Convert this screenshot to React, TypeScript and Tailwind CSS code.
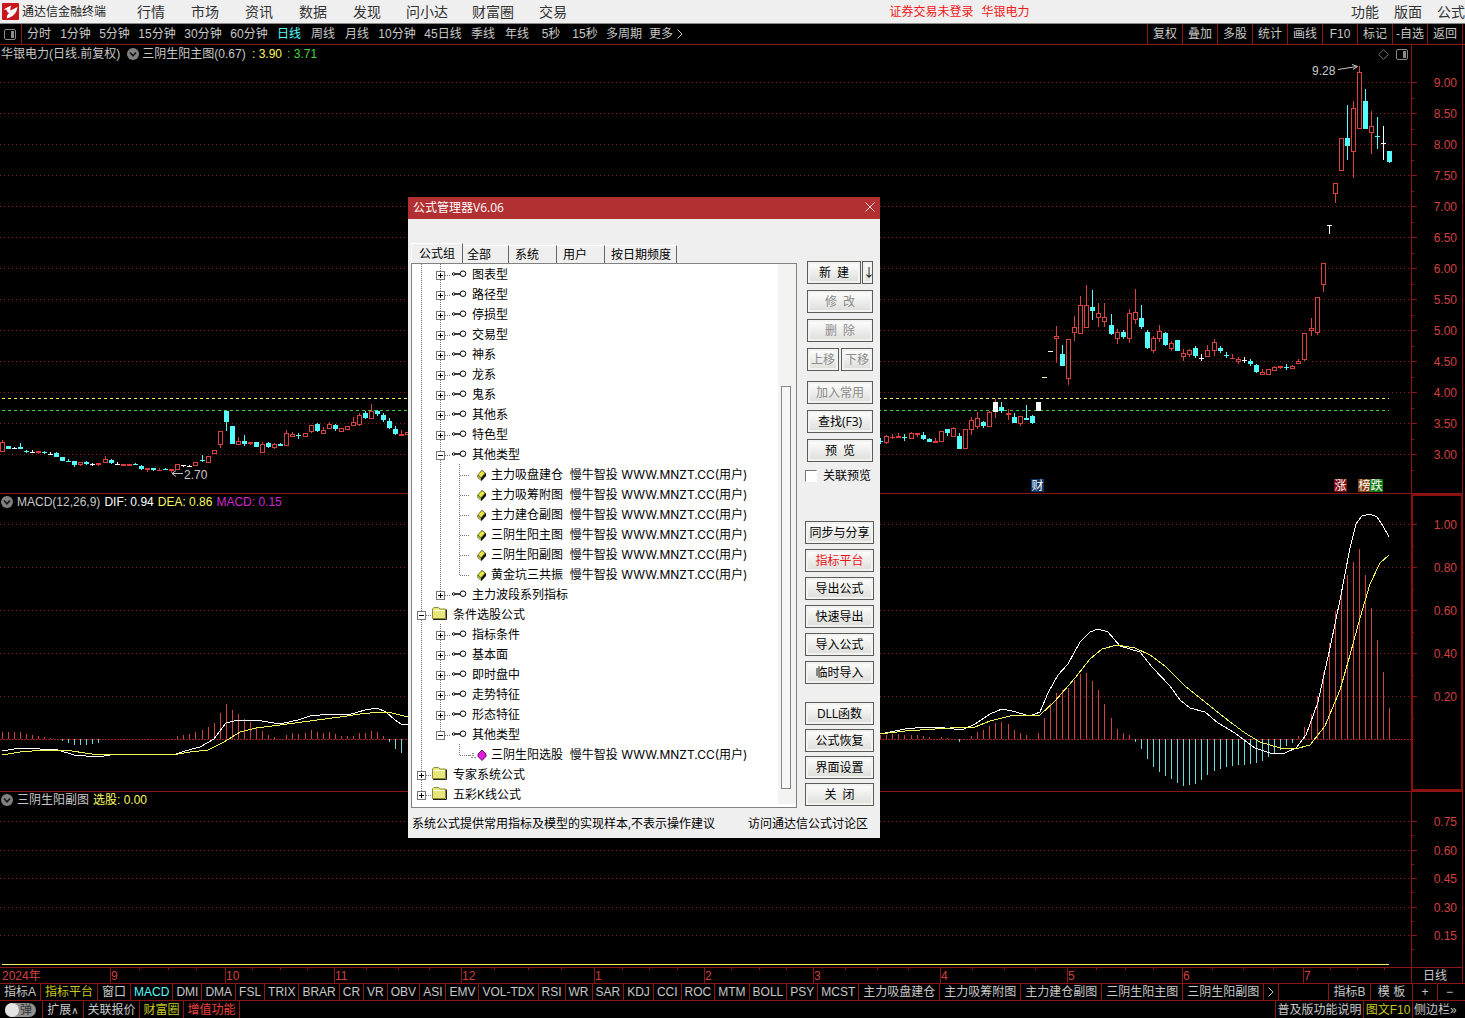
import { Fragment } from "react"

type Candle = [x: number, high: number, top: number, bottom: number, low: number, kind: "u" | "d" | "r" | "w"]
type Point = [number, number]

const menus = ["行情", "市场", "资讯", "数据", "发现", "问小达", "财富圈", "交易"]

const periods = [
  ["分时", "w-[34px]"],
  ["1分钟", "w-[39px]"],
  ["5分钟", "w-[39px]"],
  ["15分钟", "w-[46px]"],
  ["30分钟", "w-[46px]"],
  ["60分钟", "w-[46px]"],
  ["日线", "w-[34px]"],
  ["周线", "w-[34px]"],
  ["月线", "w-[34px]"],
  ["10分钟", "w-[46px]"],
  ["45日线", "w-[46px]"],
  ["季线", "w-[34px]"],
  ["年线", "w-[34px]"],
  ["5秒", "w-[34px]"],
  ["15秒", "w-[34px]"],
  ["多周期", "w-[44px]"],
]

const tools = ["复权", "叠加", "多股", "统计", "画线", "F10", "标记", "-自选", "返回"]

const candles: Candle[] = [
  [2, 440, 442, 452, 452, "u"], [8, 446, 446, 449, 449, "d"], [14, 447, 448, 449, 449, "w"], [20, 443, 447, 449, 449, "d"],
  [26, 450, 451, 452, 453, "d"], [32, 450, 452, 453, 453, "w"], [38, 451, 451, 453, 454, "r"], [44, 451, 452, 453, 454, "d"],
  [50, 452, 454, 455, 455, "w"], [56, 452, 453, 457, 457, "d"], [62, 457, 457, 461, 461, "d"], [68, 459, 461, 462, 462, "d"],
  [74, 461, 461, 465, 467, "d"], [80, 462, 462, 465, 466, "u"], [86, 461, 462, 464, 465, "d"], [92, 463, 464, 465, 466, "w"],
  [98, 463, 463, 465, 466, "r"], [105, 456, 459, 463, 463, "u"], [111, 459, 460, 463, 464, "d"], [117, 462, 464, 465, 465, "w"],
  [123, 464, 464, 466, 466, "r"], [129, 464, 464, 466, 466, "r"], [135, 463, 464, 465, 465, "d"], [141, 465, 466, 469, 470, "d"],
  [147, 468, 468, 470, 472, "r"], [153, 468, 468, 470, 471, "d"], [159, 468, 470, 471, 471, "r"], [165, 468, 469, 470, 470, "d"],
  [171, 469, 469, 471, 473, "r"], [177, 464, 464, 470, 470, "u"], [183, 465, 465, 466, 467, "w"], [189, 465, 466, 467, 467, "w"],
  [195, 462, 462, 466, 466, "u"], [202, 455, 460, 461, 462, "d"], [208, 456, 456, 463, 463, "u"], [214, 450, 450, 454, 454, "u"],
  [220, 431, 431, 445, 448, "u"], [226, 411, 411, 422, 431, "d"], [232, 426, 426, 444, 444, "d"], [238, 437, 441, 445, 445, "u"],
  [244, 435, 441, 444, 446, "d"], [250, 442, 442, 444, 445, "r"], [256, 442, 442, 447, 447, "d"], [262, 442, 444, 453, 453, "u"],
  [268, 442, 443, 447, 448, "d"], [274, 443, 444, 448, 449, "u"], [280, 443, 444, 446, 446, "d"], [286, 430, 433, 446, 446, "u"],
  [292, 432, 434, 437, 437, "u"], [298, 433, 435, 436, 439, "d"], [305, 433, 433, 437, 437, "u"], [311, 425, 425, 432, 433, "u"],
  [317, 423, 424, 431, 432, "d"], [323, 427, 430, 434, 434, "u"], [329, 422, 424, 429, 429, "u"], [335, 424, 425, 429, 431, "d"],
  [341, 428, 428, 432, 432, "u"], [347, 426, 426, 430, 430, "u"], [353, 417, 422, 426, 426, "u"], [359, 413, 415, 425, 426, "u"],
  [365, 411, 413, 418, 419, "d"], [371, 404, 411, 419, 419, "u"], [377, 410, 411, 414, 416, "d"], [383, 413, 415, 420, 422, "d"],
  [389, 418, 421, 428, 429, "d"], [395, 426, 429, 434, 435, "d"], [401, 430, 434, 436, 436, "r"], [407, 432, 432, 435, 435, "u"],
  [880, 438, 441, 442, 444, "d"], [886, 435, 436, 443, 444, "u"], [892, 434, 437, 438, 439, "r"], [898, 433, 436, 438, 438, "r"],
  [904, 434, 437, 438, 441, "d"], [911, 432, 433, 439, 439, "u"], [917, 433, 433, 435, 437, "r"], [923, 432, 435, 439, 440, "d"],
  [929, 438, 439, 442, 442, "d"], [935, 438, 441, 443, 443, "r"], [941, 431, 431, 442, 442, "u"], [947, 429, 429, 433, 436, "d"],
  [953, 427, 428, 437, 437, "u"], [959, 433, 436, 449, 449, "d"], [965, 429, 429, 449, 449, "u"], [971, 417, 420, 430, 435, "u"],
  [977, 412, 418, 427, 429, "u"], [983, 421, 422, 426, 428, "d"], [989, 411, 412, 427, 427, "u"], [1001, 402, 407, 411, 413, "d"],
  [1008, 409, 413, 415, 420, "r"], [1014, 413, 417, 423, 423, "d"], [1020, 416, 416, 424, 426, "u"], [1026, 405, 418, 420, 420, "d"],
  [1032, 415, 416, 423, 424, "d"], [1050, 351, 351, 352, 352, "w"], [1056, 326, 336, 339, 363, "u"], [1062, 345, 354, 366, 366, "d"],
  [1068, 339, 339, 379, 385, "u"], [1074, 316, 327, 333, 341, "u"], [1080, 296, 305, 334, 334, "u"], [1086, 285, 305, 328, 328, "u"],
  [1092, 290, 307, 311, 320, "d"], [1098, 303, 313, 318, 327, "u"], [1104, 303, 317, 322, 327, "u"], [1111, 314, 325, 334, 335, "d"],
  [1117, 329, 332, 339, 344, "u"], [1123, 330, 332, 337, 339, "d"], [1129, 309, 313, 339, 343, "u"], [1135, 289, 312, 320, 324, "u"],
  [1141, 305, 318, 327, 329, "d"], [1147, 330, 332, 348, 349, "d"], [1153, 336, 338, 351, 353, "u"], [1159, 325, 331, 339, 342, "u"],
  [1165, 332, 333, 345, 346, "d"], [1171, 341, 343, 349, 351, "u"], [1177, 340, 340, 351, 351, "d"], [1183, 349, 353, 357, 361, "u"],
  [1189, 349, 350, 355, 357, "u"], [1195, 346, 348, 356, 358, "d"], [1201, 354, 358, 359, 361, "w"], [1207, 345, 350, 357, 357, "u"],
  [1214, 339, 342, 351, 356, "u"], [1220, 346, 348, 351, 353, "d"], [1226, 352, 355, 356, 358, "d"], [1232, 354, 358, 359, 359, "r"],
  [1238, 357, 359, 362, 364, "u"], [1244, 357, 360, 361, 363, "w"], [1250, 359, 361, 364, 366, "d"], [1256, 364, 365, 372, 373, "d"],
  [1262, 369, 372, 375, 375, "u"], [1268, 369, 369, 375, 375, "u"], [1274, 366, 367, 371, 371, "u"], [1280, 366, 366, 368, 369, "r"],
  [1286, 364, 367, 368, 370, "d"], [1292, 365, 366, 369, 369, "u"], [1298, 359, 361, 364, 364, "u"], [1304, 333, 333, 360, 361, "u"],
  [1311, 318, 328, 331, 336, "u"], [1317, 297, 297, 333, 335, "u"], [1323, 263, 263, 285, 292, "u"], [1329, 225, 225, 226, 234, "w"],
  [1335, 183, 183, 194, 203, "u"], [1341, 138, 138, 171, 171, "u"], [1347, 105, 138, 146, 160, "d"], [1353, 101, 108, 152, 178, "u"],
  [1359, 66, 72, 129, 129, "u"], [1365, 89, 101, 129, 129, "d"], [1371, 111, 126, 133, 154, "u"], [1377, 117, 136, 137, 149, "d"],
  [1383, 126, 143, 144, 160, "w"], [1389, 151, 151, 162, 163, "d"],
]

// [x, y of the bar's far end], the zero line sits at 739
const macdBars: Point[] = [
  [2, 732], [8, 732], [14, 732], [20, 732], [26, 734], [32, 735], [38, 736], [44, 737], [50, 738], [62, 741], [68, 743],
  [74, 745], [80, 745], [86, 745], [92, 744], [98, 743], [177, 736], [183, 735], [189, 734], [195, 732], [202, 730],
  [208, 727], [214, 723], [220, 713], [226, 704], [232, 710], [238, 714], [244, 719], [250, 722], [256, 727], [262, 731],
  [268, 735], [274, 737], [286, 735], [292, 733], [298, 734], [305, 733], [311, 730], [317, 732], [323, 733], [329, 732],
  [335, 734], [341, 736], [347, 736], [353, 736], [359, 733], [365, 733], [371, 731], [377, 732], [383, 736], [389, 742],
  [395, 749], [401, 753],
  [880, 735], [886, 735], [892, 734], [898, 734], [904, 735], [911, 735], [917, 735], [923, 736], [929, 737], [941, 737],
  [947, 738], [959, 742], [971, 736], [977, 732], [983, 730], [989, 726], [995, 723], [1001, 722], [1008, 724], [1014, 730],
  [1020, 733], [1026, 735], [1038, 733], [1044, 718], [1050, 703], [1056, 693], [1062, 690], [1068, 688], [1074, 680],
  [1080, 674], [1086, 673], [1092, 681], [1098, 690], [1104, 704], [1111, 718], [1117, 729], [1123, 733], [1129, 735],
  [1135, 742], [1141, 749], [1147, 759], [1153, 767], [1159, 772], [1165, 776], [1171, 779], [1177, 783], [1183, 786],
  [1189, 785], [1195, 784], [1201, 780], [1207, 775], [1214, 771], [1220, 769], [1226, 767], [1232, 766], [1238, 765],
  [1244, 765], [1250, 764], [1256, 763], [1262, 761], [1268, 757], [1274, 753], [1280, 750], [1286, 746], [1292, 743],
  [1298, 736], [1304, 727], [1311, 714], [1317, 696], [1323, 672], [1329, 643], [1335, 611], [1341, 590], [1347, 575],
  [1353, 562], [1359, 549], [1365, 575], [1371, 608], [1377, 640], [1383, 672], [1389, 708],
]

const difLeft = "2,751 20,748 40,749 58,750 74,755 98,757 110,755 140,754 173,755 185,751 200,747 214,739 226,723 238,720 256,720 280,724 298,720 310,716 330,714 348,715 365,710 377,708 386,712 395,720 401,724 408,725"
const deaLeft = "2,755 20,752 45,750 65,750 92,754 140,754 172,755 190,752 208,750 224,742 240,732 256,728 280,725 310,721 340,717 360,714 380,712 392,713 400,715 408,717"
const difRight = "880,734 905,729 925,727 945,728 962,730 975,724 990,714 1002,709 1012,711 1030,716 1040,712 1048,693 1058,675 1068,664 1080,642 1090,632 1098,629 1108,632 1120,646 1140,652 1152,667 1170,686 1180,700 1190,708 1205,712 1218,723 1235,733 1255,748 1270,753 1285,753 1296,748 1306,735 1318,702 1330,648 1340,600 1350,548 1356,524 1362,516 1370,514 1377,517 1383,526 1389,537"
const deaRight = "880,734 905,731 950,728 975,727 990,721 1010,716 1040,715 1055,701 1075,678 1090,659 1102,649 1117,645 1135,648 1150,655 1165,666 1185,686 1205,702 1225,718 1245,733 1260,742 1280,748 1295,749 1310,745 1325,726 1340,690 1350,655 1360,618 1370,584 1380,563 1389,555"

const priceTicks = ["9.00", "8.50", "8.00", "7.50", "7.00", "6.50", "6.00", "5.50", "5.00", "4.50", "4.00", "3.50", "3.00"]
const macdTicks = ["1.00", "0.80", "0.60", "0.40", "0.20"]
const subTicks = ["0.75", "0.60", "0.45", "0.30", "0.15"]

const months: [string, number][] = [
  ["9", 110], ["10", 225], ["11", 334], ["12", 461], ["1", 594], ["2", 704],
  ["3", 813], ["4", 940], ["5", 1067], ["6", 1182], ["7", 1303], ["", 1411],
]

const indicators = [
  "指标A", "指标平台", "窗口", "MACD", "DMI", "DMA", "FSL", "TRIX", "BRAR", "CR", "VR", "OBV", "ASI", "EMV", "VOL-TDX",
  "RSI", "WR", "SAR", "KDJ", "CCI", "ROC", "MTM", "BOLL", "PSY", "MCST", "主力吸盘建仓", "主力吸筹附图", "主力建仓副图",
  "三阴生阳主图", "三阴生阳副图",
]

// guides: one letter per indent column
// | vertical line, + closed box, - open box, L last open box, E last closed box, t tee, e elbow, space for nothing
type Row = [guides: string, icon: "key" | "folder" | "yellow" | "pink", text: string]

const rows: Row[] = [
  ["|+", "key", "图表型"],
  ["|+", "key", "路径型"],
  ["|+", "key", "停损型"],
  ["|+", "key", "交易型"],
  ["|+", "key", "神系"],
  ["|+", "key", "龙系"],
  ["|+", "key", "鬼系"],
  ["|+", "key", "其他系"],
  ["|+", "key", "特色型"],
  ["|-", "key", "其他类型"],
  ["||t", "yellow", "主力吸盘建仓  慢牛智投 WWW.MNZT.CC(用户)"],
  ["||t", "yellow", "主力吸筹附图  慢牛智投 WWW.MNZT.CC(用户)"],
  ["||t", "yellow", "主力建仓副图  慢牛智投 WWW.MNZT.CC(用户)"],
  ["||t", "yellow", "三阴生阳主图  慢牛智投 WWW.MNZT.CC(用户)"],
  ["||t", "yellow", "三阴生阳副图  慢牛智投 WWW.MNZT.CC(用户)"],
  ["||e", "yellow", "黄金坑三共振  慢牛智投 WWW.MNZT.CC(用户)"],
  ["|E", "key", "主力波段系列指标"],
  ["-", "folder", "条件选股公式"],
  ["|+", "key", "指标条件"],
  ["|+", "key", "基本面"],
  ["|+", "key", "即时盘中"],
  ["|+", "key", "走势特征"],
  ["|+", "key", "形态特征"],
  ["|L", "key", "其他类型"],
  ["| e", "pink", "三阴生阳选股  慢牛智投 WWW.MNZT.CC(用户)"],
  ["+", "folder", "专家系统公式"],
  ["E", "folder", "五彩K线公式"],
]

function CandleStick({ c }: { c: Candle }) {
  const [x, high, top, bottom, low, kind] = c
  const color = kind === "d" ? "#54fcfc" : kind === "w" ? "#ffffff" : kind === "r" ? "#e23a3a" : "#d8433f"
  return (
    <g>
      <rect x={x} y={high} width={1} height={low - high} fill={color} />
      {kind === "u" ? (
        <rect x={x - 1.5} y={top + 0.5} width={4} height={bottom - top - 1} fill="#000" stroke={color} />
      ) : (
        <rect x={x - 2} y={top} width={5} height={bottom - top} fill={color} />
      )}
    </g>
  )
}

function GridLines({ ys }: { ys: number[] }) {
  return (
    <g stroke="#8c1c1c" strokeDasharray="1 3">
      {ys.map((y) => (
        <line key={y} x1={0} x2={1411} y1={y + 0.5} y2={y + 0.5} />
      ))}
    </g>
  )
}

function Axis({ top, height, first, step, labels, selected }: {
  top: number
  height: number
  first: number
  step: number
  labels: string[]
  selected?: boolean
}) {
  return (
    <svg
      viewBox={`1411 ${top} 54 ${height}`}
      preserveAspectRatio="none"
      className="block h-full w-[54px] shrink-0 text-xs"
      shapeRendering="crispEdges"
    >
      <rect x={1411} y={top} width={1} height={height} fill="#8c1616" />
      <rect x={1462} y={top} width={1} height={height} fill="#8c1616" />
      {selected && <rect x={1412} y={top + 1} width={50} height={height - 2} fill="none" stroke="#8c1010" strokeWidth={2} />}
      {labels.map((label, i) => {
        const y = Math.round(first + i * step)
        return (
          <g key={label} fill="#8c1616">
            <rect x={1412} y={y} width={5} height={1} />
            <rect x={1412} y={Math.round(y + step / 2)} width={2} height={1} />
            <text x={1457} y={y + 5} textAnchor="end" fill="#d04040">
              {label}
            </text>
          </g>
        )
      })}
    </svg>
  )
}

function Chevron() {
  return (
    <svg viewBox="0 0 12 12" className="size-3 shrink-0">
      <circle cx="6" cy="6" r="6" fill="#808080" />
      <path d="M3 4.5 6 7.8 9 4.5" fill="none" stroke="#151515" strokeWidth="1.6" />
    </svg>
  )
}

function PanelIcon() {
  return (
    <svg viewBox="0 0 12 11" className="h-[11px] w-3 shrink-0">
      <rect x=".5" y=".5" width="11" height="10" rx="1.5" fill="none" stroke="#8a8a8a" />
      <rect x="7" y="2" width="3" height="7" fill="#8a8a8a" />
    </svg>
  )
}

function Guide({ kind }: { kind: string }) {
  const box = "+-LE".includes(kind)
  const last = "LEe".includes(kind)
  return (
    <svg viewBox="0 0 19 20" className="block h-5 w-[19px] shrink-0" shapeRendering="crispEdges">
      {kind !== " " && (
        <line x1="9.5" x2="9.5" y1="0" y2={last ? 11 : 20} stroke="#777" strokeDasharray="1 1" />
      )}
      {kind !== " " && kind !== "|" && <line x1="10" x2="19" y1="11.5" y2="11.5" stroke="#777" strokeDasharray="1 1" />}
      {box && (
        <>
          <rect x="5.5" y="7.5" width="8" height="8" fill="#fff" stroke="#777" />
          <rect x="7" y="11" width="5" height="1" fill="#000" />
          {(kind === "+" || kind === "E") && <rect x="9" y="9" width="1" height="5" fill="#000" />}
        </>
      )}
    </svg>
  )
}

function TreeIcon({ name }: { name: Row[1] }) {
  return (
    <svg viewBox="0 0 19 20" className="block h-5 w-[19px] shrink-0">
      {name === "key" && (
        <g fill="none" stroke="#000">
          <circle cx="3.7" cy="10" r="1.3" />
          <path d="M5 10h5" strokeWidth="1.5" />
          <circle cx="13" cy="9.7" r="2.8" />
        </g>
      )}
      {name === "folder" && (
        <>
          <path d="M1.500 14.500V5L3 3.500h4.500L9 5H14.500V14.500Z" fill="#e6e67a" stroke="#8a8a3a" />
          <path d="M2 15.500H15.500V5.500" fill="none" stroke="#222" />
          <path d="M2.500 6.500H13.500" stroke="#fffff0" />
        </>
      )}
      {name === "yellow" && (
        <>
          <path d="M8.500 11 13 6 17 9.500V12L12.500 17 8.500 13.500Z" fill="#111" />
          <path d="M9 10.800 13 6.500 16 9.300 12 13.700Z" fill="#e9e94a" stroke="#77771c" strokeWidth=".6" />
          <path d="M9 11.500 12 14.200V16.300L9 13.500Z" fill="#c9c93a" />
        </>
      )}
      {name === "pink" && (
        <>
          <path d="M0 11.500h6M2 13.500h5M3 9.500h3" stroke="#888" strokeDasharray="2 1" />
          <path d="M9 10 13 6 17 10V12.500L13 16.500 9 12.500Z" fill="#e01be0" stroke="#3c003c" strokeWidth=".8" />
        </>
      )}
    </svg>
  )
}

function DialogButton({ children, className = "w-full", disabled = false }: {
  children: string
  className?: string
  disabled?: boolean
}) {
  return (
    <button
      disabled={disabled}
      className={`h-[23px] whitespace-pre border border-[#5c5c58] bg-linear-to-b from-white to-[#dcdcd8] leading-5 shadow-[inset_0_0_0_2px_#f2f2f0] disabled:text-[#8c8c8c] ${className}`}
    >
      {children}
    </button>
  )
}

function FormulaDialog() {
  return (
    <section
      role="dialog"
      aria-label="公式管理器V6.06"
      className="absolute left-[408px] top-[197px] flex w-[472px] flex-col bg-[#efefef] pb-1 font-['Open_Sans','Noto_Sans_CJK_SC',sans-serif] text-xs text-black"
    >
      <header className="flex h-[22px] items-center justify-between bg-[#b23032] pl-[5px] pr-[5px] text-white">
        <h2>公式管理器V6.06</h2>
        <button aria-label="关闭窗口" className="pb-[2px]">
          <svg viewBox="0 0 10 10" className="size-[10px]">
            <path d="M.5.5l9 9M9.500.5l-9 9" stroke="#f3d5d5" />
          </svg>
        </button>
      </header>
      <div className="flex pl-[3px] pr-[6px] pt-6">
        <div className="w-[386px]">
          <div role="tablist" className="flex items-end leading-4">
            <button role="tab" aria-selected className="h-5 w-[52px] border-l border-t border-r border-l-white border-r-[#666] border-t-white pt-px">
              公式组
            </button>
            <button role="tab" className="h-[18px] w-[46px] border-r border-t border-r-[#666] border-t-white pl-1 text-left">
              全部
            </button>
            <button role="tab" className="h-[18px] w-12 border-r border-t border-r-[#666] border-t-white pl-[6px] text-left">
              系统
            </button>
            <button role="tab" className="h-[18px] w-12 border-r border-t border-r-[#666] border-t-white pl-[6px] text-left">
              用户
            </button>
            <button role="tab" className="h-[18px] w-[72px] border-r border-t border-r-[#666] border-t-white pl-[6px] text-left">
              按日期频度
            </button>
          </div>
          <div className="flex border border-[#828282] bg-white pb-[3px]">
            <ul className="flex-1 font-[Inter,'Noto_Sans_CJK_SC',sans-serif]">
              {rows.map(([guides, icon, text], i) => (
                <li key={i} className="flex h-5 items-center whitespace-pre leading-5">
                  {guides.split("").map((kind, n) => (
                    <Guide key={n} kind={kind} />
                  ))}
                  <TreeIcon name={icon} />
                  <span className="pl-[3px] pt-[2px]">{text}</span>
                </li>
              ))}
            </ul>
            <div className="w-[18px] bg-[#f3f3f2] pl-[3px] pt-[122px]">
              <div className="h-[403px] w-[10px] border border-[#858585] bg-[#f6f6f6]" />
            </div>
          </div>
        </div>
        <div className="flex flex-1 flex-col pl-2 pt-[18px]">
          <div className="flex flex-col gap-[6px] pl-[2px] pr-px">
            <div className="flex gap-px">
              <DialogButton className="flex-1">{"新  建"}</DialogButton>
              <DialogButton className="w-[11px]">↓</DialogButton>
            </div>
            <DialogButton disabled>{"修  改"}</DialogButton>
            <DialogButton disabled>{"删  除"}</DialogButton>
            <div className="flex gap-[2px]">
              <DialogButton className="flex-1" disabled>上移</DialogButton>
              <DialogButton className="flex-1" disabled>下移</DialogButton>
            </div>
            <div className="flex flex-col gap-[6px] pt-1">
              <DialogButton disabled>加入常用</DialogButton>
              <DialogButton>查找(F3)</DialogButton>
              <DialogButton>{"预  览"}</DialogButton>
            </div>
          </div>
          <label className="flex items-center gap-[6px] whitespace-nowrap pt-[5px] leading-[18px]">
            <input type="checkbox" className="size-3 appearance-none border border-b-white border-l-[#777] border-r-white border-t-[#777] bg-white" />
            关联预览
          </label>
          <div className="flex flex-col gap-[5px] pt-9">
            <DialogButton>同步与分享</DialogButton>
            <DialogButton className="w-full text-[#e8141c]">指标平台</DialogButton>
            <DialogButton>导出公式</DialogButton>
            <DialogButton>快速导出</DialogButton>
            <DialogButton>导入公式</DialogButton>
            <DialogButton>临时导入</DialogButton>
          </div>
          <div className="flex flex-col gap-1 pt-[18px]">
            <DialogButton>DLL函数</DialogButton>
            <DialogButton>公式恢复</DialogButton>
            <DialogButton>界面设置</DialogButton>
            <DialogButton>{"关  闭"}</DialogButton>
          </div>
        </div>
      </div>
      <footer className="flex justify-between pl-1 pr-3 pt-[6px] leading-5">
        <span>系统公式提供常用指标及模型的实现样本,不表示操作建议</span>
        <a href="#forum">访问通达信公式讨论区</a>
      </footer>
    </section>
  )
}

function Badge({ x, fill, children }: { x: number; fill: string; children: string }) {
  return (
    <g>
      <rect x={x} y={479} width={13} height={13} fill={fill} />
      <text x={x + 0.5} y={490} fill="#fff">
        {children}
      </text>
    </g>
  )
}

export default function App() {
  return (
    <div className="relative flex h-screen min-h-[900px] flex-col overflow-hidden bg-black font-['Liberation_Sans','Noto_Sans_CJK_SC',sans-serif] text-xs text-[#c8c8c8]">
      {/* Menu bar */}
      <header className="flex h-6 shrink-0 items-center whitespace-nowrap border-b border-[#8a8a8a] bg-[#efefef] pl-[2px] text-[#333]">
        <svg viewBox="0 0 17 17" className="size-[17px] shrink-0">
          <rect width="17" height="17" rx="1" fill="#c8161c" />
          <path d="M1.500 6.500C4 5.500 6 3.500 9.500 2.500 8.500 4 8 5.500 8.500 7.500L15.500 4C15 9.500 11 14 5 15.500 4.500 13 5.500 11.200 7.500 10 5.500 9.800 4.800 8.500 4.800 7 3.500 6.500 2.500 6.500 1.500 6.500Z" fill="#fff" />
        </svg>
        <h1 className="w-[105px] pl-[3px] text-[#222]">通达信金融终端</h1>
        <nav className="flex text-sm">
          {menus.map((m) => (
            <button key={m} className={m.length > 2 ? "w-[66px]" : "w-[54px]"}>
              {m}
            </button>
          ))}
        </nav>
        <div className="flex flex-1 justify-center gap-2 pr-3 text-[#f01818]">
          <span>证券交易未登录</span>
          <span>华银电力</span>
        </div>
        <nav className="flex gap-[15px] text-sm">
          <button>功能</button>
          <button>版面</button>
          <button>公式</button>
        </nav>
      </header>

      {/* Periods and tools */}
      <div className="flex h-[21px] shrink-0 whitespace-nowrap border-b border-[#8c1616] pr-[2px]">
        <div className="flex w-[22px] items-center border-r border-[#8c1616] pl-1">
          <PanelIcon />
        </div>
        <nav className="flex flex-1">
          {periods.map(([label, width]) => (
            <button key={label} className={`${width} ${label === "日线" ? "text-[#54fcfc]" : ""}`}>
              {label}
            </button>
          ))}
          <button className="flex items-center gap-1 pl-[3px]">
            更多
            <svg viewBox="0 0 6 10" className="h-[10px] w-[6px]">
              <path d="M.5.5 5 5 .5 9.500" fill="none" stroke="#c8c8c8" />
            </svg>
          </button>
        </nav>
        <div className="flex border-r border-[#8c1616]">
          {tools.map((t) => (
            <button key={t} className="w-[35px] border-l border-[#8c1616]">
              {t}
            </button>
          ))}
        </div>
      </div>

      {/* Price chart */}
      <div className="flex min-h-0 flex-[448]">
        <div className="flex min-w-0 flex-1 flex-col">
          <div className="flex h-[18px] shrink-0 items-center whitespace-pre pl-px pr-[3px]">
            <span className="pr-[7px]">华银电力(日线.前复权)</span>
            <Chevron />
            <span className="pl-[3px]">三阴生阳主图(0.67) </span>
            <span className="pl-[3px] text-[#f8f860]">: 3.90</span>
            <span className="pl-[5px] text-[#40d840]">: 3.71</span>
            <span className="flex flex-1 items-center justify-end gap-[7px]">
              <svg viewBox="0 0 11 11" className="size-[11px]">
                <path d="M5.500.7 10.300 5.500 5.500 10.300.7 5.500Z" fill="none" stroke="#777" />
              </svg>
              <PanelIcon />
            </span>
          </div>
          <svg viewBox="0 63 1411 430" preserveAspectRatio="none" className="block min-h-0 w-full flex-1" shapeRendering="crispEdges">
            <GridLines ys={priceTicks.map((_, i) => 82 + i * 31)} />
            <line x1={2} x2={1389} y1={398.5} y2={398.5} stroke="#f4f45c" strokeDasharray="3 3" />
            <line x1={2} x2={1389} y1={410.5} y2={410.5} stroke="#3cd43c" strokeDasharray="3 3" />
            {candles.map((c) => (
              <CandleStick key={c[0]} c={c} />
            ))}
            <rect x={995} y={399} width={1} height={19} fill="#d8433f" />
            <rect x={993} y={402} width={5} height={10} fill="#fff" />
            <rect x={1036} y={402} width={5} height={9} fill="#fff" />
            <rect x={1042} y={377} width={5} height={1} fill="#f6f6a0" />
            <g fill="#c8c8c8">
              <text x={1312} y={75}>9.28</text>
              <text x={184} y={479}>2.70</text>
            </g>
            <g fill="none" stroke="#c8c8c8" shapeRendering="auto">
              <path d="M1338 69.500 1357 66.500M1352 64.500 1357.500 66.500 1353 69.500" />
              <path d="M183 473.500H172M176 470.500 172 473.500 176 476.500" />
            </g>
            <Badge x={1031} fill="#0c3568">财</Badge>
            <Badge x={1334} fill="#7c0a0e">涨</Badge>
            <Badge x={1358} fill="#84420c">榜</Badge>
            <Badge x={1370} fill="#0c7c14">跌</Badge>
          </svg>
        </div>
        <Axis top={45} height={448} first={82} step={31} labels={priceTicks} />
      </div>
      <div className="mr-[2px] h-px shrink-0 bg-[#8c1616]" />

      {/* MACD */}
      <div className="flex min-h-0 flex-[297]">
        <div className="flex min-w-0 flex-1 flex-col">
          <div className="flex h-4 shrink-0 items-center gap-1 whitespace-nowrap pl-px">
            <Chevron />
            <span>MACD(12,26,9)</span>
            <span className="text-white">DIF: 0.94</span>
            <span className="text-[#f8f860]">DEA: 0.86</span>
            <span className="text-[#d028d0]">MACD: 0.15</span>
          </div>
          <svg viewBox="0 510 1411 281" preserveAspectRatio="none" className="block min-h-0 w-full flex-1" shapeRendering="crispEdges">
            <GridLines ys={[524, 567, 610, 653, 696]} />
            <line x1={0} x2={1411} y1={739.5} y2={739.5} stroke="#a02020" strokeDasharray="2 1" />
            {macdBars.map(([x, y]) => (
              <rect
                key={x}
                x={x}
                y={Math.min(y, 739)}
                width={1}
                height={Math.abs(739 - y)}
                fill={y < 739 ? "#d04440" : "#6adada"}
              />
            ))}
            <g fill="none">
              {[difLeft, difRight].map((p) => (
                <polyline key={p} points={p} stroke="#fff" />
              ))}
              {[deaLeft, deaRight].map((p) => (
                <polyline key={p} points={p} stroke="#f4f45c" />
              ))}
            </g>
          </svg>
        </div>
        <Axis top={494} height={297} first={524} step={43} labels={macdTicks} selected />
      </div>
      <div className="mr-[2px] h-px shrink-0 bg-[#8c1616]" />

      {/* Signal */}
      <div className="flex min-h-0 flex-[175]">
        <div className="flex min-w-0 flex-1 flex-col">
          <div className="flex h-4 shrink-0 items-center gap-1 whitespace-nowrap pl-px">
            <Chevron />
            <span>三阴生阳副图</span>
            <span className="text-[#f8f860]">选股: 0.00</span>
          </div>
          <svg viewBox="0 808 1411 159" preserveAspectRatio="none" className="block min-h-0 w-full flex-1" shapeRendering="crispEdges">
            <GridLines ys={[821, 850, 878, 907, 935]} />
            <rect x={2} y={964} width={1387} height={1} fill="#f4f45c" />
          </svg>
        </div>
        <Axis top={792} height={175} first={821} step={28.5} labels={subTicks} />
      </div>

      {/* Dates */}
      <div className="mr-[2px] flex h-4 shrink-0 border-r border-t border-[#8c1616]">
        <svg viewBox="0 968 1411 15" preserveAspectRatio="none" className="block h-full min-w-0 flex-1" shapeRendering="crispEdges">
          <text x={2} y={980} fill="#d04040">2024年</text>
          {months.map(([label, x], i) => {
            const next = months[i + 1]
            const quarter = next ? (next[1] - x) / 4 : 0
            return (
              <Fragment key={x}>
                {label && <rect x={x} y={968} width={1} height={15} fill="#8c1616" />}
                <text x={x + 1} y={980} fill="#d04040">{label}</text>
                {next && [1, 2, 3].map((n) => (
                  <rect key={n} x={Math.round(x + quarter * n)} y={968} width={1} height={2} fill="#8c1616" />
                ))}
              </Fragment>
            )
          })}
        </svg>
        <div className="flex w-[51px] items-center justify-center border-l border-[#8c1616] pr-1">日线</div>
      </div>

      {/* Indicator tabs */}
      <nav className="flex h-[17px] shrink-0 whitespace-nowrap border-t border-[#8c1616] leading-4">
        {indicators.map((name) => (
          <button
            key={name}
            className={`border-r border-[#8c1616] ${/^[A-Z]/.test(name) ? "px-[3px]" : "px-1"} ${
              name === "指标平台" ? "text-[#c8c820]" : name === "MACD" ? "text-[#54fcfc]" : ""
            }`}
          >
            {name}
          </button>
        ))}
        <button className="w-[15px] border-r border-[#8c1616]" aria-label="更多指标">
          <svg viewBox="0 0 6 10" className="mx-auto h-[10px] w-[6px]">
            <path d="M.5.5 5 5 .5 9.500" fill="none" stroke="#c8c8c8" />
          </svg>
        </button>
        <div className="ml-auto flex">
          <button className="w-[42px] border-l border-[#8c1616]">指标B</button>
          <button className="w-[42px] border-l border-[#8c1616]">模 板</button>
          <button className="w-[25px] border-l border-[#8c1616]">+</button>
          <button className="w-[28px] border-l border-[#8c1616] pr-1">−</button>
        </div>
      </nav>

      {/* Status bar */}
      <footer className="flex h-[18px] shrink-0 whitespace-nowrap border-t border-[#8c1616] leading-[18px]">
        <div className="flex w-[43px] items-center border-r border-[#8c1616] pl-[5px]">
          <button className="flex h-[14px] w-[31px] items-center justify-between rounded-full bg-[#909090] pr-1 leading-[14px] text-[#333]">
            <span className="size-[14px] rounded-full bg-[#e4e4e4]" />弹
          </button>
        </div>
        <button className="w-[41px] border-r border-[#8c1616]">
          扩展<span className="font-['DejaVu_Sans',sans-serif] text-[10px]">∧</span>
        </button>
        <button className="w-14 border-r border-[#8c1616]">关联报价</button>
        <button className="w-[44px] border-r border-[#8c1616] text-[#c8c820]">财富圈</button>
        <button className="w-14 border-r border-[#8c1616] text-[#f04040]">增值功能</button>
        <div className="ml-auto flex">
          <button className="w-[88px] border-l border-[#8c1616]">普及版功能说明</button>
          <button className="w-[49px] border-l border-[#8c1616] text-[#c8c820]">图文F10</button>
          <button className="w-[53px] border-l border-[#8c1616] pl-px text-left">侧边栏»</button>
        </div>
      </footer>

      <FormulaDialog />
    </div>
  )
}
